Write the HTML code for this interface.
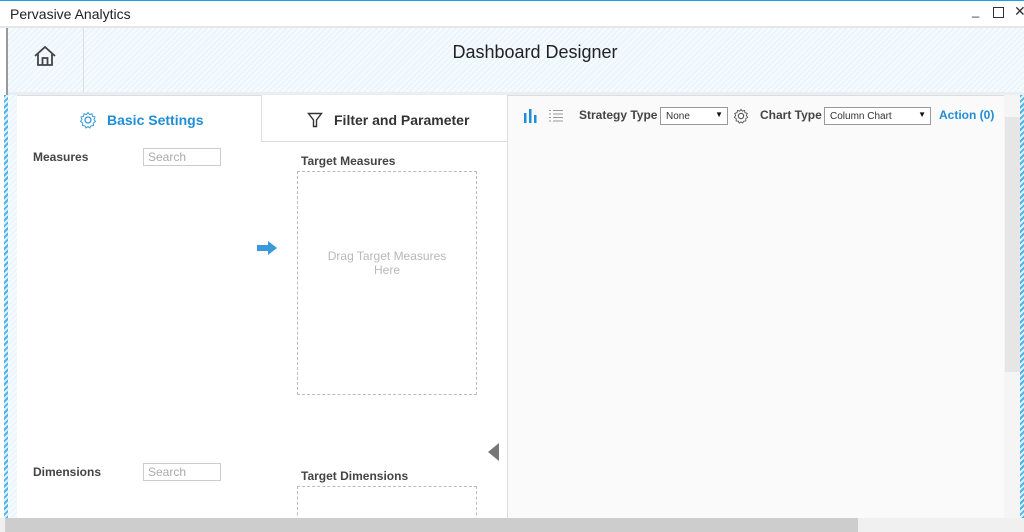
<!DOCTYPE html>
<html><head><meta charset="utf-8"><style>
*{margin:0;padding:0;box-sizing:border-box}
body{width:1024px;height:532px;overflow:hidden;background:#fff;font-family:"Liberation Sans",sans-serif;position:relative}
.a{position:absolute}
.hatch{background:repeating-linear-gradient(135deg,#eaf5fc 0 2px,#f7fbfe 2px 4px)}
.hatchb{background:repeating-linear-gradient(135deg,#4fb3ea 0 2px,#dff1fc 2px 4px)}
.lbl{font-size:12px;font-weight:bold;color:#444}
.search{width:78px;height:18px;border:1px solid #ccc;font-size:12px;color:#aaa;padding:1px 4px;background:#fff}
.sel{height:18px;border:1px solid #999;background:#fff;font-size:10px;color:#333;padding:3px 5px;position:absolute}
.sel:after{content:"▼";position:absolute;right:4px;top:2px;font-size:8px;color:#111}
</style></head><body>
<div class="a" style="left:0;top:0;width:1024px;height:1px;background:#1ba1e2"></div>
<div class="a" style="left:10px;top:6px;font-size:14px;color:#222">Pervasive Analytics</div>
<div class="a" style="left:972px;top:3px;font-size:13px;color:#333">_</div>
<div class="a" style="left:993px;top:7px;width:11px;height:11px;border:1px solid #333"></div>
<div class="a" style="left:1014px;top:3px;font-size:14px;color:#333">✕</div>
<div class="a" style="left:0;top:26px;width:1024px;height:2px;background:#e6e6e6"></div>
<div class="a" style="left:6px;top:28px;width:2px;height:492px;background:#999"></div>
<div class="a hatch" style="left:8px;top:28px;width:1016px;height:64px"></div>
<div class="a" style="left:83px;top:28px;width:1px;height:64px;background:#ddd"></div>
<svg class="a" style="left:33px;top:45px" width="24" height="22" viewBox="0 0 24 22"><path d="M2 11 L12 2 L22 11 M5 9 V20 H19 V9 M9.5 20 V13 H14.5 V20" fill="none" stroke="#444" stroke-width="1.8"/></svg>
<div class="a" style="left:0;width:1070px;top:42px;text-align:center;font-size:18px;color:#222">Dashboard Designer</div>
<div class="a" style="left:8px;top:92px;width:1016px;height:3px;background:#e8eef2"></div>
<div class="a hatch" style="left:8px;top:95px;width:9px;height:425px"></div>
<div class="a hatchb" style="left:4px;top:95px;width:4px;height:425px"></div>
<div class="a hatchb" style="left:1020px;top:95px;width:4px;height:425px"></div>
<div class="a" style="left:17px;top:95px;width:490px;height:425px;background:#fff;border-top:1px solid #ddd"></div>
<div class="a" style="left:261px;top:95px;width:246px;height:47px;border-left:1px solid #ddd;border-bottom:1px solid #ddd;background:#fff"></div>
<svg class="a" style="left:79px;top:111px" width="18" height="18" viewBox="0 0 18 18"><circle cx="9" cy="9" r="3" fill="none" stroke="#3a9ad9" stroke-width="1.3"/><path d="M9 1.5 L10.5 3.5 L13 2.8 L13.5 5.3 L16 6 L15 8.5 L16.5 10.5 L14.3 12 L14.5 14.5 L12 14.8 L10.8 17 L9 15.5 L7 17 L6 14.8 L3.5 14.5 L3.7 12 L1.5 10.5 L3 8.5 L2 6 L4.5 5.3 L5 2.8 L7.5 3.5Z" fill="none" stroke="#3a9ad9" stroke-width="1"/></svg>
<div class="a" style="left:107px;top:112px;font-size:14px;font-weight:bold;color:#1f8ed6">Basic Settings</div>
<svg class="a" style="left:307px;top:112px" width="16" height="16" viewBox="0 0 16 16"><path d="M1.5 1.5 H14.5 L9.5 8 V14.5 H6.5 V8 Z" fill="none" stroke="#333" stroke-width="1.4"/></svg>
<div class="a" style="left:334px;top:112px;font-size:14px;font-weight:bold;color:#333">Filter and Parameter</div>
<div class="a lbl" style="left:33px;top:150px">Measures</div>
<div class="a search" style="left:143px;top:148px">Search</div>
<div class="a lbl" style="left:301px;top:154px">Target Measures</div>
<div class="a" style="left:297px;top:171px;width:180px;height:224px;border:1px dashed #bbb"></div>
<div class="a" style="left:297px;top:249px;width:180px;text-align:center;font-size:12px;color:#b8b8b8;line-height:14px">Drag Target Measures<br>Here</div>
<svg class="a" style="left:256px;top:240px" width="22" height="16" viewBox="0 0 22 16"><path d="M1 5 H12 V1 L21 8 L12 15 V11 H1Z" fill="#3a9ad9"/></svg>
<svg class="a" style="left:488px;top:443px" width="12" height="18" viewBox="0 0 12 18"><path d="M11 0 V18 L0 9Z" fill="#777"/></svg>
<div class="a lbl" style="left:33px;top:465px">Dimensions</div>
<div class="a search" style="left:143px;top:463px">Search</div>
<div class="a lbl" style="left:301px;top:469px">Target Dimensions</div>
<div class="a" style="left:297px;top:486px;width:180px;height:40px;border:1px dashed #bbb"></div>
<div class="a" style="left:507px;top:95px;width:497px;height:425px;background:#fafafa;border-left:1px solid #ddd;border-top:1px solid #ddd"></div>
<div class="a" style="left:1004px;top:95px;width:16px;height:425px;background:#f5f5f5"></div>
<div class="a" style="left:1005px;top:117px;width:15px;height:255px;background:#e6e6e6"></div>
<svg class="a" style="left:523px;top:109px" width="16" height="14"><rect x="1" y="4" width="2.5" height="10" fill="#1f8ed6"/><rect x="6" y="0" width="2.5" height="14" fill="#1f8ed6"/><rect x="11" y="6" width="2.5" height="8" fill="#1f8ed6"/></svg>
<svg class="a" style="left:548px;top:109px" width="16" height="14"><g stroke="#999" stroke-width="1"><path d="M1 1.5H3M5 1.5H15M1 5H3M5 5H15M1 8.5H3M5 8.5H15M1 12H3M5 12H15"/></g></svg>
<div class="a lbl" style="left:579px;top:108px;font-size:12px">Strategy Type</div>
<div class="sel" style="left:660px;top:107px;width:68px">None</div>
<svg class="a" style="left:733px;top:108px" width="16" height="16" viewBox="0 0 18 18"><circle cx="9" cy="9" r="3" fill="none" stroke="#555" stroke-width="1.3"/><path d="M9 1.5 L10.5 3.5 L13 2.8 L13.5 5.3 L16 6 L15 8.5 L16.5 10.5 L14.3 12 L14.5 14.5 L12 14.8 L10.8 17 L9 15.5 L7 17 L6 14.8 L3.5 14.5 L3.7 12 L1.5 10.5 L3 8.5 L2 6 L4.5 5.3 L5 2.8 L7.5 3.5Z" fill="none" stroke="#555" stroke-width="1"/></svg>
<div class="a lbl" style="left:760px;top:108px;font-size:12px">Chart Type</div>
<div class="sel" style="left:824px;top:107px;width:107px">Column Chart</div>
<div class="a" style="left:939px;top:108px;font-size:12px;font-weight:bold;color:#1f8ed6">Action (0)</div>
<div class="a" style="left:0;top:518px;width:1024px;height:14px;background:#f0f0f0"></div>
<div class="a" style="left:5px;top:518px;width:853px;height:14px;background:#cdcdcd"></div>
</body></html>
